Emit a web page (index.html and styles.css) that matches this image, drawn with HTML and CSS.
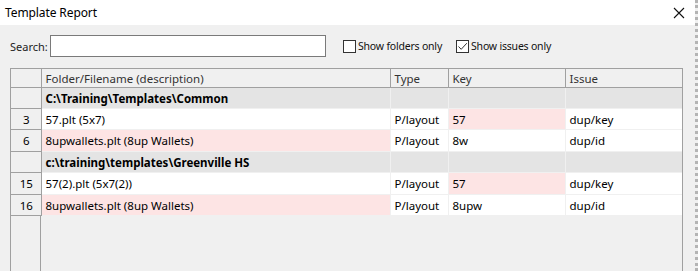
FILE: index.html
```html
<!DOCTYPE html>
<html lang="en">
<head>
    <meta charset="UTF-8">
    <title>Template Report</title>
    <link rel="stylesheet" href="styles.css">
</head>
<body>
    <div class="window">
        <div class="titlebar">
            <span class="title">Template Report</span>
            <svg class="close" width="12" height="12" viewBox="0 0 12 12">
                <path d="M1 1L11 11M11 1L1 11" stroke="#111" stroke-width="1.1" fill="none"/>
            </svg>
        </div>
        <div class="content">
            <div class="toolbar">
                <label for="search" class="search-label">Search:</label>
                <input id="search" class="search-box" type="text">
                <label class="check"><span class="box"></span>Show folders only</label>
                <label class="check"><span class="box">
                    <svg width="11" height="11" viewBox="0 0 11 11"><path d="M1.5 5.5L4.2 8.3L9.8 2.2" stroke="#333" stroke-width="1" fill="none"/></svg>
                </span>Show issues only</label>
            </div>
            <div class="grid">
                <table>
                    <thead>
                        <tr>
                            <th class="num"></th>
                            <th class="col-file">Folder/Filename (description)</th>
                            <th class="col-type">Type</th>
                            <th class="col-key">Key</th>
                            <th class="col-issue">Issue</th>
                        </tr>
                    </thead>
                    <tbody>
                        <tr class="folder">
                            <td class="num"></td>
                            <td>C:\Training\Templates\Common</td>
                            <td></td><td></td><td></td>
                        </tr>
                        <tr class="h21">
                            <td class="num">3</td>
                            <td>57.plt (5x7)</td>
                            <td>P/layout</td>
                            <td class="bad">57</td>
                            <td>dup/key</td>
                        </tr>
                        <tr class="h22">
                            <td class="num">6</td>
                            <td class="bad">8upwallets.plt (8up Wallets)</td>
                            <td>P/layout</td>
                            <td>8w</td>
                            <td>dup/id</td>
                        </tr>
                        <tr class="folder">
                            <td class="num"></td>
                            <td>c:\training\templates\Greenville HS</td>
                            <td></td><td></td><td></td>
                        </tr>
                        <tr class="h22">
                            <td class="num">15</td>
                            <td>57(2).plt (5x7(2))</td>
                            <td>P/layout</td>
                            <td class="bad">57</td>
                            <td>dup/key</td>
                        </tr>
                        <tr class="h21">
                            <td class="num">16</td>
                            <td class="bad">8upwallets.plt (8up Wallets)</td>
                            <td>P/layout</td>
                            <td>8upw</td>
                            <td>dup/id</td>
                        </tr>
                    </tbody>
                </table>
            </div>
        </div>
    </div>
</body>
</html>
```

FILE: styles.css
```css
html, body {
    margin: 0;
    height: 100%;
    overflow: hidden;
}
body {
    font-family: "Noto Sans", "Open Sans", sans-serif;
    font-size: 11.5px;
    color: #000;
    background: #c8c8c8;
}
.window {
    width: 695px;
    height: 100%;
    display: flex;
    flex-direction: column;
    background: #f0f0f0;
    border-right: 3px dotted #b4b4b4;
}
.titlebar {
    height: 25px;
    flex: none;
    display: flex;
    align-items: center;
    justify-content: space-between;
    background: #fff;
    padding: 0 10px 0 5px;
}
.title {
    font-size: 12px;
    color: #000;
    letter-spacing: -0.1px;
}
.content {
    flex: 1;
    display: flex;
    flex-direction: column;
    padding: 0 12px 0 10px;
    min-height: 0;
}
.toolbar {
    height: 43px;
    flex: none;
    display: flex;
    align-items: center;
    padding-bottom: 1px;
    box-sizing: border-box;
}
.search-label {
    font-size: 11px;
    color: #222;
    width: 40px;
}
.search-box {
    width: 276px;
    height: 22px;
    box-sizing: border-box;
    border: 1px solid #7a7a7a;
    background: #fff;
    margin: 0 17px 0 0;
    padding: 0 3px;
    font: inherit;
}
.check {
    display: flex;
    align-items: center;
    font-size: 10.5px;
    letter-spacing: -0.2px;
    color: #111;
    margin-right: 14px;
}
.box {
    width: 13px;
    height: 13px;
    box-sizing: border-box;
    border: 1px solid #333;
    background: #fff;
    margin-right: 2px;
    display: flex;
    align-items: center;
    justify-content: center;
}
.grid {
    flex: 1;
    border: 1px solid #a0a0a0;
    border-bottom: none;
    background: linear-gradient(to right, transparent 29px, #a0a0a0 29px, #a0a0a0 30px, transparent 30px);
}
table {
    width: 100%;
    border-collapse: collapse;
    table-layout: fixed;
}
th, td {
    padding: 0 0 0 4px;
    text-align: left;
    white-space: nowrap;
    overflow: hidden;
    font-weight: normal;
}
th {
    height: 18px;
    color: #333;
    background: #f0f0f0;
    border-right: 1px solid #a0a0a0;
    border-bottom: 1px solid #a0a0a0;
}
th:last-child {
    border-right: none;
}
td {
    background: #fff;
    border: 1px solid #f0f0f0;
    border-top: none;
}
td:last-child {
    border-right: none;
}
th.num, td.num {
    width: 29px;
    padding: 0;
    text-align: center;
    background: #f0f0f0;
    border-right: 1px solid #a0a0a0;
    border-bottom: 1px solid #a0a0a0;
}
.col-file { width: 344px; }
.col-type { width: 53px; }
.col-key { width: 112px; }
tr.folder td {
    height: 20px;
    background: #e4e4e4;
    font-weight: bold;
}
tr.folder td.num {
    background: #f0f0f0;
}
tr.h21 td { height: 20px; }
tr.h22 td { height: 21px; }
td.bad {
    background: #fde4e4;
}
```
